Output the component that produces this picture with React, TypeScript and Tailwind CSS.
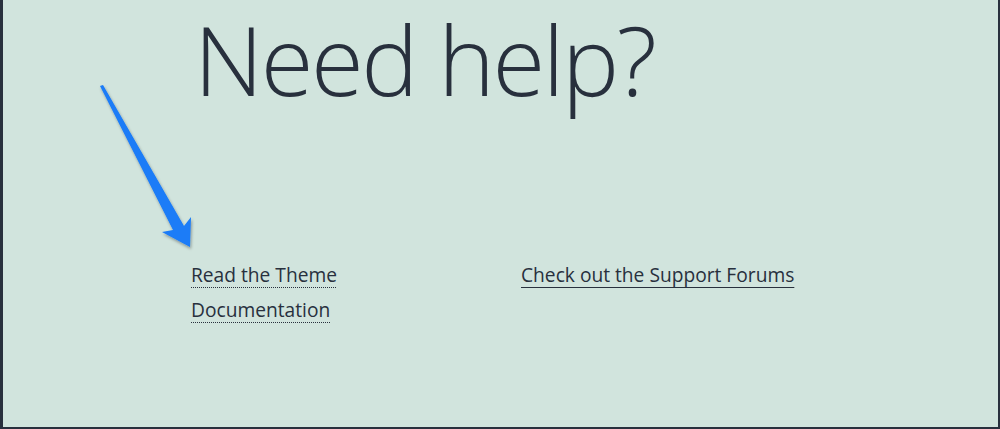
const Arrow = () => (
  <svg className="absolute left-[90px] top-[80px]" width="110" height="180" viewBox="0 0 110 180">
    <defs>
      <filter id="sh" x="-20%" y="-20%" width="140%" height="140%">
        <feDropShadow dx="1" dy="2" stdDeviation="1.5" floodColor="#000" floodOpacity="0.35" />
      </filter>
    </defs>
    <path
      d="M7 6 L10 5 L91 146 L98 137 L97 167 L69 152 L80 150 Z"
      fill="#1a7bf7"
      filter="url(#sh)"
    />
  </svg>
)

export default function App() {
  return (
    <div className="relative w-[1000px] h-[429px] bg-[#d1e4dd] border-l-[3px] border-r-2 border-b-2 border-[#28303d] text-[#28303d]" style={{ fontFamily: '"Open Sans", "Noto Sans", sans-serif' }}>
      <Arrow />
      <h1 className="pl-[191px] text-[96px] font-light leading-[118px] tracking-[-2.5px]">Need help?</h1>
      <div className="flex pl-[188px] pt-[139px] text-[19.2px] leading-[35px]">
        <div className="w-[330px]">
          <a href="#" className="underline decoration-dotted decoration-1 underline-offset-[5px]">
            Read the Theme<br />Documentation
          </a>
        </div>
        <div>
          <a href="#" className="underline decoration-1 underline-offset-[5px]">Check out the Support Forums</a>
        </div>
      </div>
    </div>
  )
}
